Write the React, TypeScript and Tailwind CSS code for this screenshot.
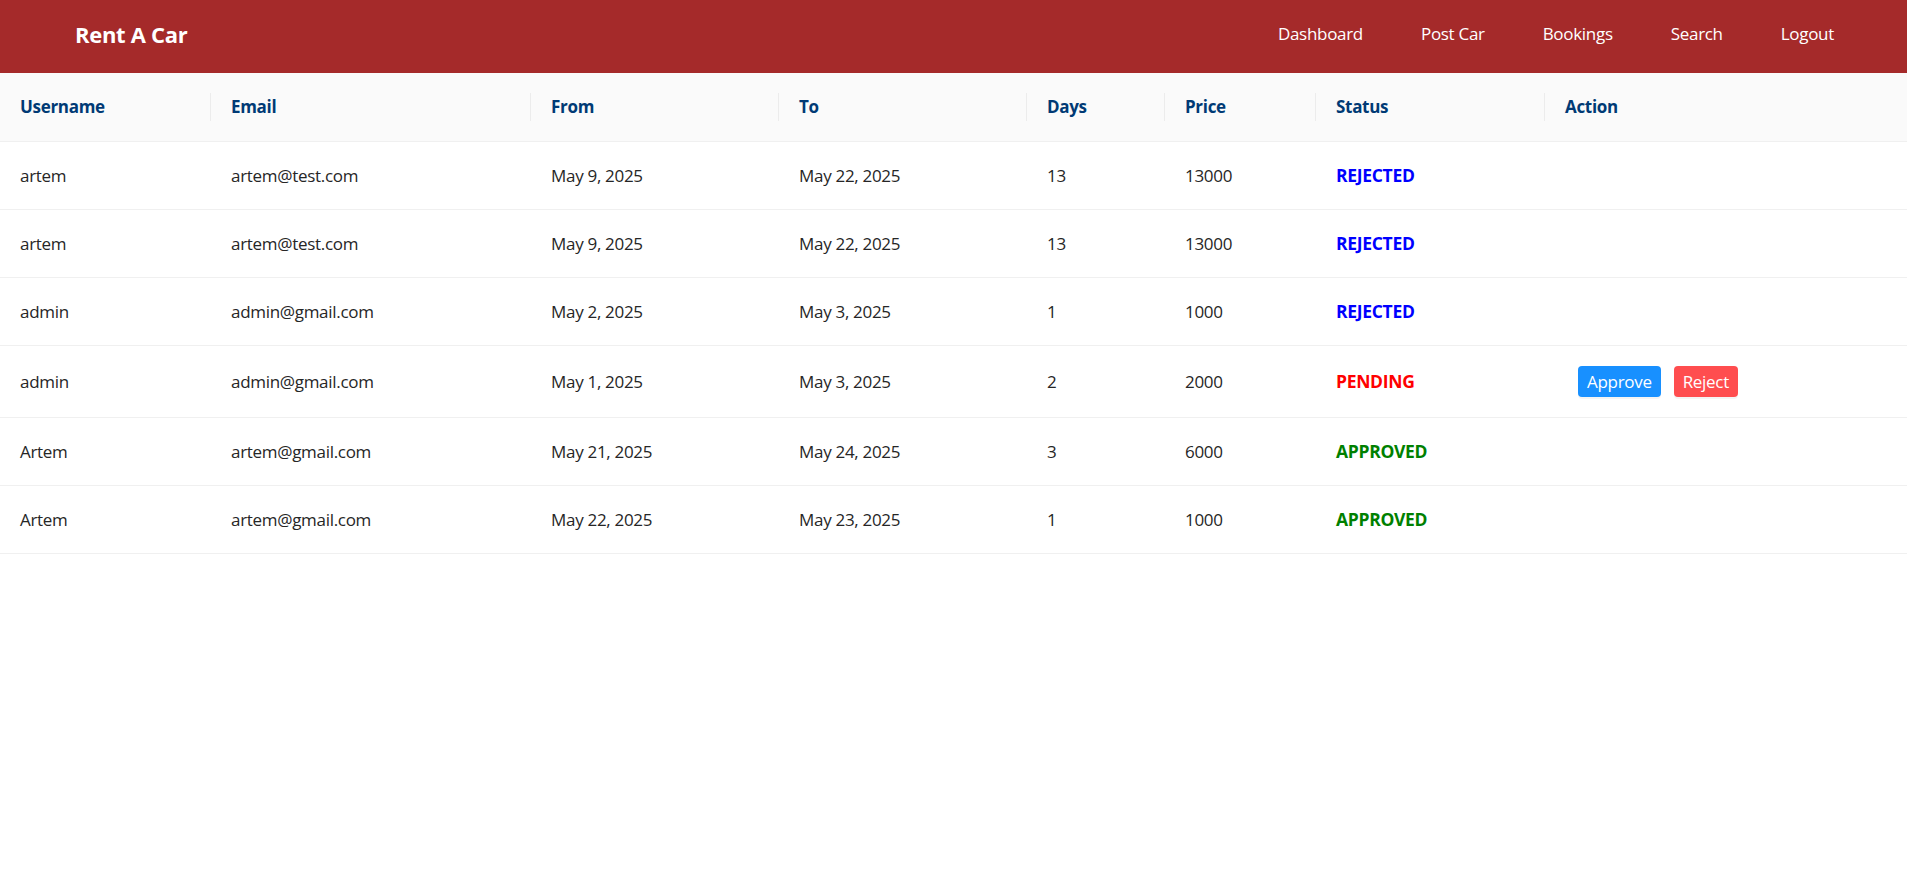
import React from 'react'

type Booking = {
  username: string
  email: string
  from: string
  to: string
  days: number
  price: number
  status: 'REJECTED' | 'PENDING' | 'APPROVED'
}

const bookings: Booking[] = [
  { username: 'artem', email: 'artem@test.com', from: 'May 9, 2025', to: 'May 22, 2025', days: 13, price: 13000, status: 'REJECTED' },
  { username: 'artem', email: 'artem@test.com', from: 'May 9, 2025', to: 'May 22, 2025', days: 13, price: 13000, status: 'REJECTED' },
  { username: 'admin', email: 'admin@gmail.com', from: 'May 2, 2025', to: 'May 3, 2025', days: 1, price: 1000, status: 'REJECTED' },
  { username: 'admin', email: 'admin@gmail.com', from: 'May 1, 2025', to: 'May 3, 2025', days: 2, price: 2000, status: 'PENDING' },
  { username: 'Artem', email: 'artem@gmail.com', from: 'May 21, 2025', to: 'May 24, 2025', days: 3, price: 6000, status: 'APPROVED' },
  { username: 'Artem', email: 'artem@gmail.com', from: 'May 22, 2025', to: 'May 23, 2025', days: 1, price: 1000, status: 'APPROVED' },
]

const statusColor = {
  REJECTED: 'text-[#0000ff]',
  PENDING: 'text-[#ff0000]',
  APPROVED: 'text-[#008000]',
}

const columns = ['Username', 'Email', 'From', 'To', 'Days', 'Price', 'Status', 'Action']
const navLinks = ['Dashboard', 'Post Car', 'Bookings', 'Search', 'Logout']

export default function App() {
  return (
    <div className="min-h-screen bg-white font-['Open_Sans','Noto_Sans',sans-serif] text-[17px]">
      {/* top nav */}
      <header className="h-[73px] bg-[#a52a2a] flex items-center justify-between pl-[75px] pr-[44px] pb-[5px]">
        <div className="text-white font-bold text-[22px] tracking-[-0.3px]">Rent A Car</div>
        <nav className="flex items-center">
          {navLinks.map((link) => (
            <a key={link} href="#" className="text-white text-[17px] px-[29px] tracking-[-0.3px]">
              {link}
            </a>
          ))}
        </nav>
      </header>

      <table className="w-full table-fixed border-collapse">
        <colgroup>
          <col className="w-[211px]" />
          <col className="w-[320px]" />
          <col className="w-[248px]" />
          <col className="w-[248px]" />
          <col className="w-[138px]" />
          <col className="w-[151px]" />
          <col className="w-[229px]" />
          <col />
        </colgroup>
        <thead>
          <tr className="bg-[#fafafa] border-b border-[#f0f0f0]">
            {columns.map((col, i) => (
              <th
                key={col}
                className="relative h-[68px] px-[20px] text-left font-bold text-[#003a75] tracking-[-0.3px]"
              >
                {col}
                {i < columns.length - 1 && (
                  <span className="absolute right-0 top-1/2 -translate-y-1/2 w-px h-[28px] bg-[#ececec]" />
                )}
              </th>
            ))}
          </tr>
        </thead>
        <tbody>
          {bookings.map((b, i) => (
            <tr key={i} className="border-b border-[#f0f0f0] text-[#262626] tracking-[-0.3px]">
              <td className="px-[20px] py-[20px] leading-[27px]">{b.username}</td>
              <td className="px-[20px] py-[20px] leading-[27px]">{b.email}</td>
              <td className="px-[20px] py-[20px] leading-[27px]">{b.from}</td>
              <td className="px-[20px] py-[20px] leading-[27px]">{b.to}</td>
              <td className="px-[20px] py-[20px] leading-[27px]">{b.days}</td>
              <td className="px-[20px] py-[20px] leading-[27px]">{b.price}</td>
              <td className={`px-[20px] py-[20px] leading-[27px] font-bold text-[17.5px] ${statusColor[b.status]}`}>{b.status}</td>
              <td className="px-[20px] py-[20px] leading-[27px]">
                {b.status === 'PENDING' && (
                  <div className="flex items-center gap-[13px] ml-[13px]">
                    <button className="h-[31px] px-[9px] rounded-[4px] bg-[#1890ff] text-white text-[17px] shadow-[0_2px_0_rgba(0,0,0,0.045)]">
                      Approve
                    </button>
                    <button className="h-[31px] px-[9px] rounded-[4px] bg-[#ff4d4f] text-white text-[17px] shadow-[0_2px_0_rgba(0,0,0,0.045)]">
                      Reject
                    </button>
                  </div>
                )}
              </td>
            </tr>
          ))}
        </tbody>
      </table>
    </div>
  )
}
